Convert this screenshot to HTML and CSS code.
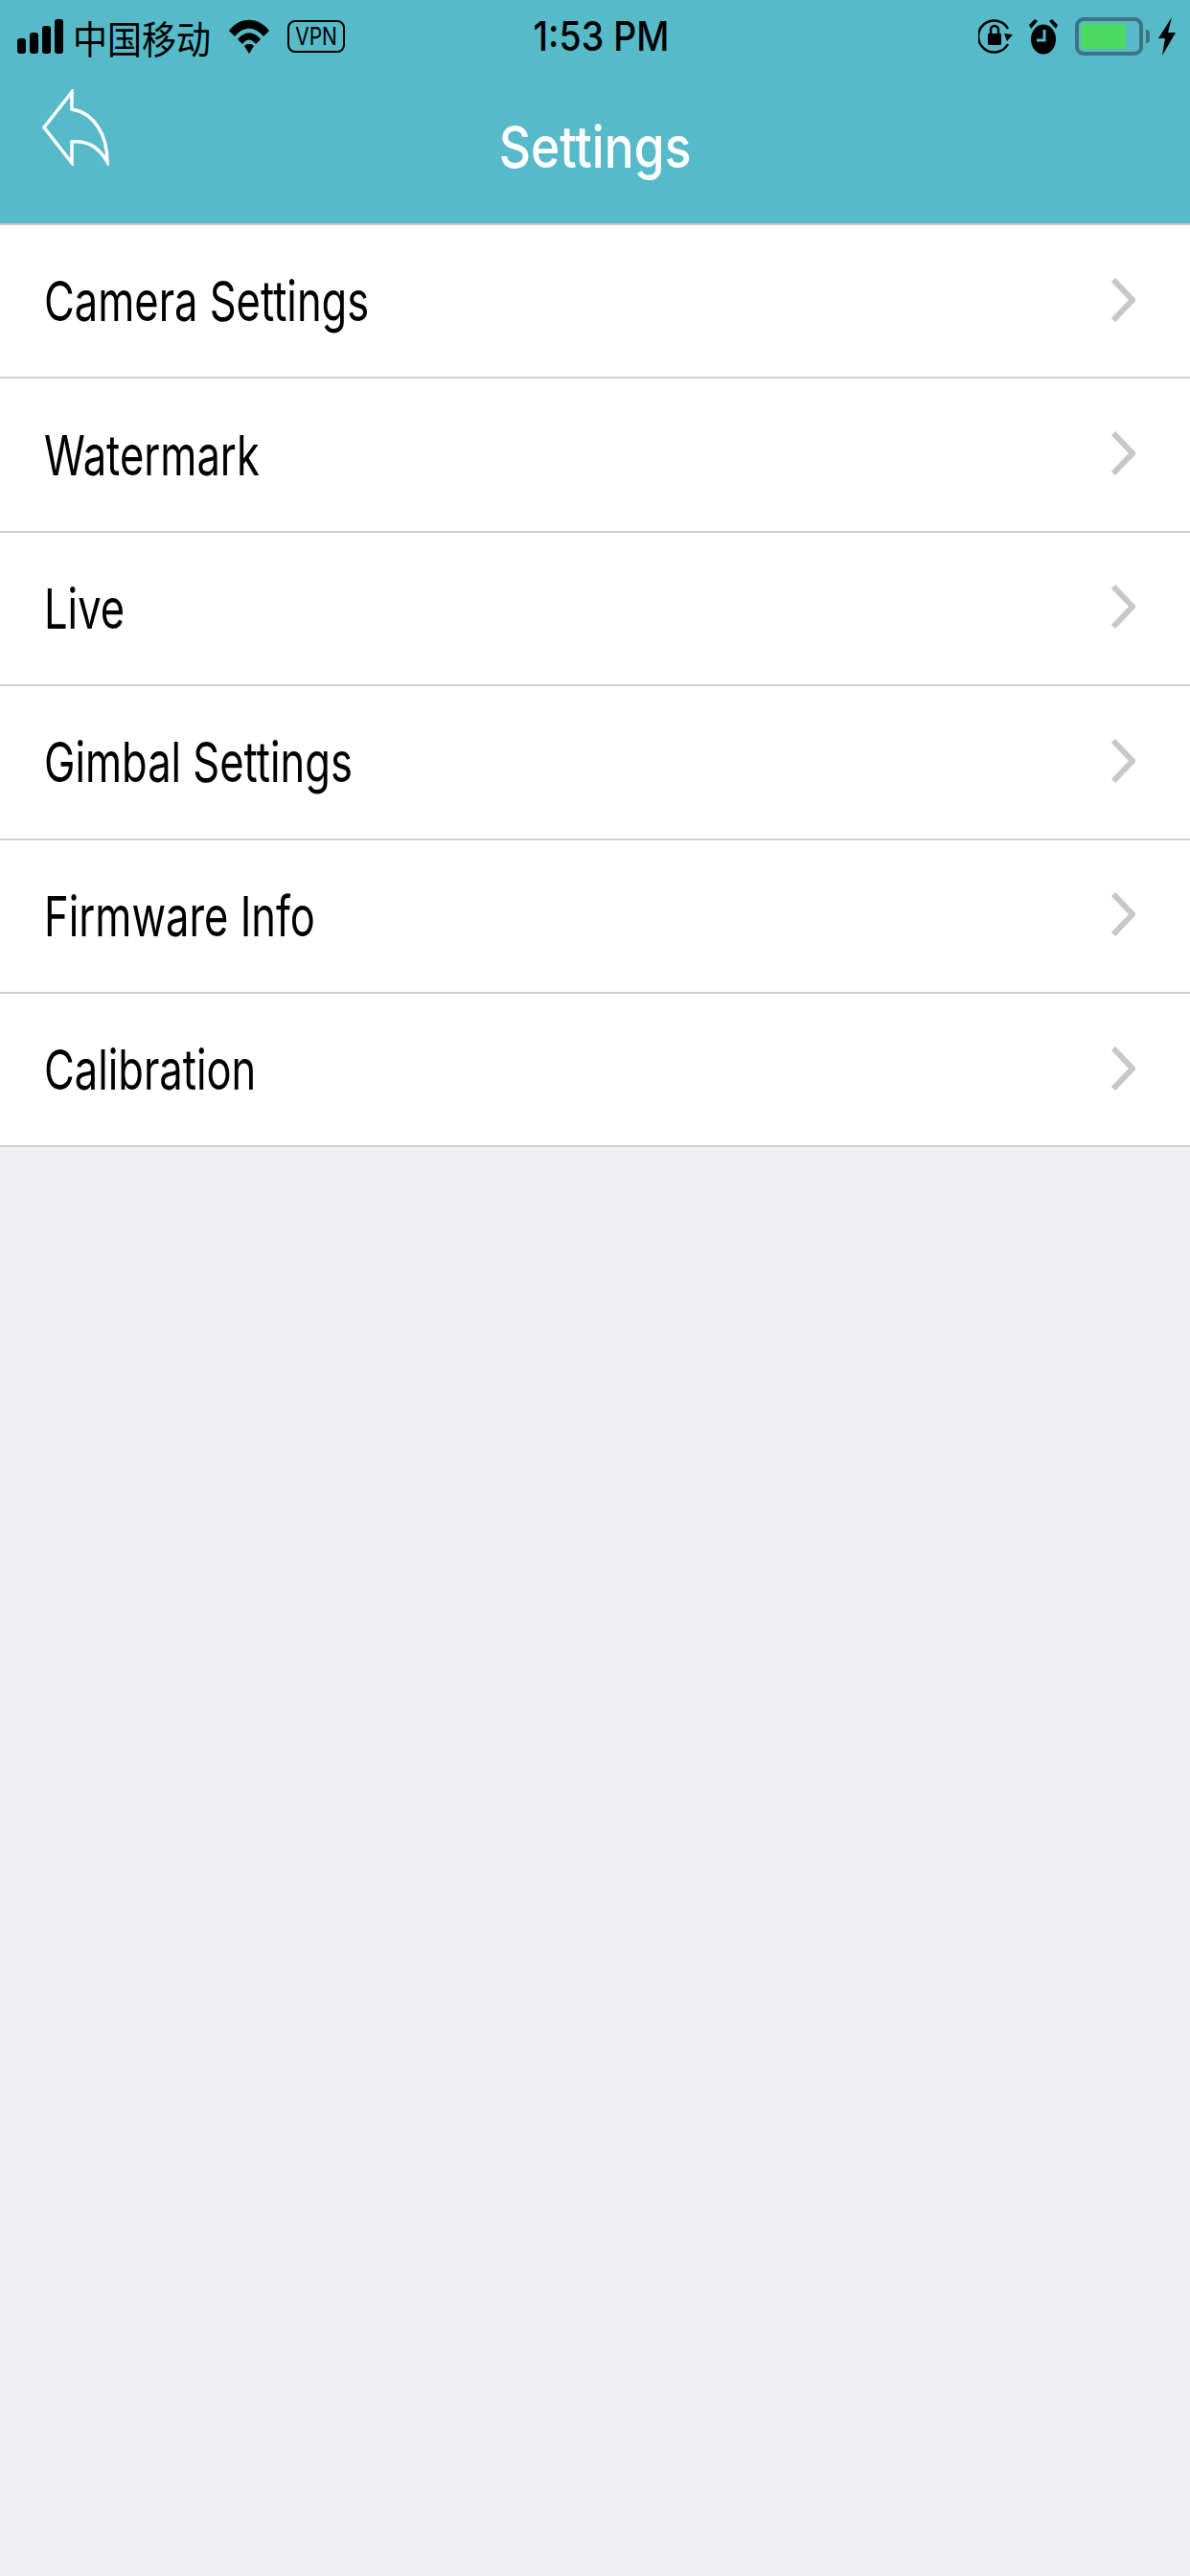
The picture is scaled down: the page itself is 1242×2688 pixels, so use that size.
FILE: index.html
```html
<!DOCTYPE html>
<html lang="en">
<head>
    <meta charset="UTF-8">
    <meta name="viewport" content="width=device-width, initial-scale=1.0">
    <title>Settings</title>
    <link rel="stylesheet" href="styles.css">
</head>
<body>
    <header class="header">
        <!-- Status bar -->
        <div class="status-bar">
            <div class="status-left">
                <svg class="signal" width="48" height="36" viewBox="0 0 48 36">
                    <rect x="0" y="20" width="9" height="16" rx="3"/>
                    <rect x="13" y="14" width="9" height="22" rx="3"/>
                    <rect x="26" y="7" width="9" height="29" rx="3"/>
                    <rect x="39" y="0" width="9" height="36" rx="3"/>
                </svg>
                <span class="carrier">中国移动</span>
                <svg class="wifi" width="42" height="36" viewBox="0 0 42 36">
                    <path d="M0 12 C12 -3 30 -3 42 12 L36 18 C27 7 15 7 6 18 Z"/>
                    <path d="M9 21 C16 12 26 12 33 21 L28 26 C23 20 19 20 14 26 Z"/>
                    <path d="M16 28 C19 25 23 25 26 28 L21 36 Z"/>
                </svg>
                <span class="vpn"><span class="vpn-text">VPN</span></span>
            </div>
            <div class="status-time"><span class="time-text">1:53 PM</span></div>
            <div class="status-right">
                <svg class="rotation-lock" width="36" height="38" viewBox="0 0 36 38">
                    <path class="lock-ring" d="M31 27 A16.5 16.5 0 1 1 31 11"/>
                    <path d="M27 16 L36 17 L30 24 Z"/>
                    <rect x="10" y="16" width="14" height="12" rx="1"/>
                    <path class="lock-shackle" d="M13 16 V12 A4 4 0 0 1 21 12 V16"/>
                </svg>
                <svg class="alarm" width="30" height="38" viewBox="0 0 30 38">
                    <ellipse cx="15" cy="22" rx="13" ry="15.5"/>
                    <path d="M0 7 L6 1 L9 3 L2 11 Z"/>
                    <path d="M30 7 L24 1 L21 3 L28 11 Z"/>
                    <path class="alarm-hand" d="M16 12 V23 H8"/>
                </svg>
                <div class="battery"><div class="battery-level"></div></div>
                <div class="battery-nub"></div>
                <svg class="bolt" width="18" height="40" viewBox="0 0 18 40">
                    <path d="M14 0 L0 22 L7 22 L4 40 L18 16 L10 16 Z"/>
                </svg>
            </div>
        </div>

        <!-- Title bar -->
        <div class="title-bar">
            <svg class="back-icon" width="72" height="80" viewBox="0 0 72 80">
                <path d="M31 3 L2 40 L31 77 L31 55 C48 53 60 62 68 76 C68 47 54 25 31 21 Z"/>
            </svg>
            <h1 class="title"><span class="title-text">Settings</span></h1>
        </div>
    </header>

    <ul class="menu">
        <li class="menu-row"><span class="menu-label">Camera Settings</span><svg class="chevron" width="26" height="48" viewBox="0 0 26 48"><path d="M3 3 L23 24 L3 45"/></svg></li>
        <li class="menu-row"><span class="menu-label">Watermark</span><svg class="chevron" width="26" height="48" viewBox="0 0 26 48"><path d="M3 3 L23 24 L3 45"/></svg></li>
        <li class="menu-row"><span class="menu-label">Live</span><svg class="chevron" width="26" height="48" viewBox="0 0 26 48"><path d="M3 3 L23 24 L3 45"/></svg></li>
        <li class="menu-row"><span class="menu-label">Gimbal Settings</span><svg class="chevron" width="26" height="48" viewBox="0 0 26 48"><path d="M3 3 L23 24 L3 45"/></svg></li>
        <li class="menu-row"><span class="menu-label">Firmware Info</span><svg class="chevron" width="26" height="48" viewBox="0 0 26 48"><path d="M3 3 L23 24 L3 45"/></svg></li>
        <li class="menu-row"><span class="menu-label">Calibration</span><svg class="chevron" width="26" height="48" viewBox="0 0 26 48"><path d="M3 3 L23 24 L3 45"/></svg></li>
    </ul>
</body>
</html>
```

FILE: styles.css
```css
html, body {
    margin: 0;
    padding: 0;
}

body {
    width: 1242px;
    height: 2688px;
    overflow: hidden;
    background-color: #efeff4;
    font-family: Inter, Roboto, "Liberation Sans", "Noto Sans CJK SC", sans-serif;
    color: #000;
}

.header {
    height: 235px;
    box-sizing: border-box;
    background-color: #57bac9;
    border-bottom: 2px solid #c8c7cc;
}

.status-bar {
    height: 76px;
    display: grid;
    grid-template-columns: 1fr auto 1fr;
    align-items: center;
    padding: 0 15px 0 18px;
}

.status-left,
.status-right {
    display: flex;
    align-items: center;
}

.status-right {
    justify-content: flex-end;
}

.carrier {
    margin-left: 10px;
    font-family: "Noto Sans CJK SC", sans-serif;
    font-size: 36px;
    line-height: 40px;
    transform: scaleY(1.1);
}

.wifi {
    margin-left: 19px;
}

.vpn {
    margin-left: 19px;
    width: 60px;
    height: 34px;
    box-sizing: border-box;
    border: 2px solid #000;
    border-radius: 8px;
    display: flex;
    align-items: center;
    justify-content: center;
}

.vpn-text {
    font-size: 21px;
    line-height: 30px;
    transform: scaleY(1.25);
}

.status-time {
    padding-left: 10px;
}

.time-text {
    display: inline-block;
    font-size: 37.5px;
    font-weight: 500;
    line-height: 40px;
    transform: scaleY(1.12);
}

.rotation-lock {
    margin-right: 17px;
}

.lock-ring {
    fill: none;
    stroke: #000;
    stroke-width: 2.5;
}

.lock-shackle {
    fill: none;
    stroke: #000;
    stroke-width: 2.5;
}

.alarm-hand {
    fill: none;
    stroke: #57bac9;
    stroke-width: 3;
}

.battery {
    margin-left: 18px;
    width: 71px;
    height: 40px;
    box-sizing: border-box;
    border: 4px solid #3b7585;
    border-radius: 9px;
    padding: 3px 0 3px 2px;
}

.battery-level {
    width: 47px;
    height: 100%;
    background-color: #4cd964;
}

.battery-nub {
    width: 4px;
    height: 14px;
    margin-left: 3px;
    background-color: #3b7585;
    border-radius: 0 7px 7px 0;
}

.bolt {
    margin-left: 9px;
}

.title-bar {
    position: relative;
    height: 157px;
    display: flex;
    align-items: center;
    justify-content: center;
}

.back-icon {
    position: absolute;
    left: 44px;
    top: 17px;
    fill: none;
    stroke: #fff;
    stroke-width: 3.5;
}

.title {
    margin: 0 0 4px;
    font-size: 51.5px;
    font-weight: 500;
    line-height: 60px;
    color: #fff;
}

.title-text {
    display: inline-block;
    transform: scaleY(1.17);
}

.menu {
    list-style: none;
    margin: 0;
    padding: 0;
    background-color: #fff;
}

.menu-row {
    height: 158.4px;
    border-bottom: 2px solid #d0d0d4;
    display: flex;
    align-items: center;
    justify-content: space-between;
    padding: 0 57px 0 46px;
}

.menu-label {
    display: inline-block;
    font-size: 43.5px;
    line-height: 60px;
    transform: scaleY(1.33);
    transform-origin: left center;
}

.chevron {
    fill: none;
    stroke: #c7c7cc;
    stroke-width: 6;
    margin-top: -3px;
}
```
